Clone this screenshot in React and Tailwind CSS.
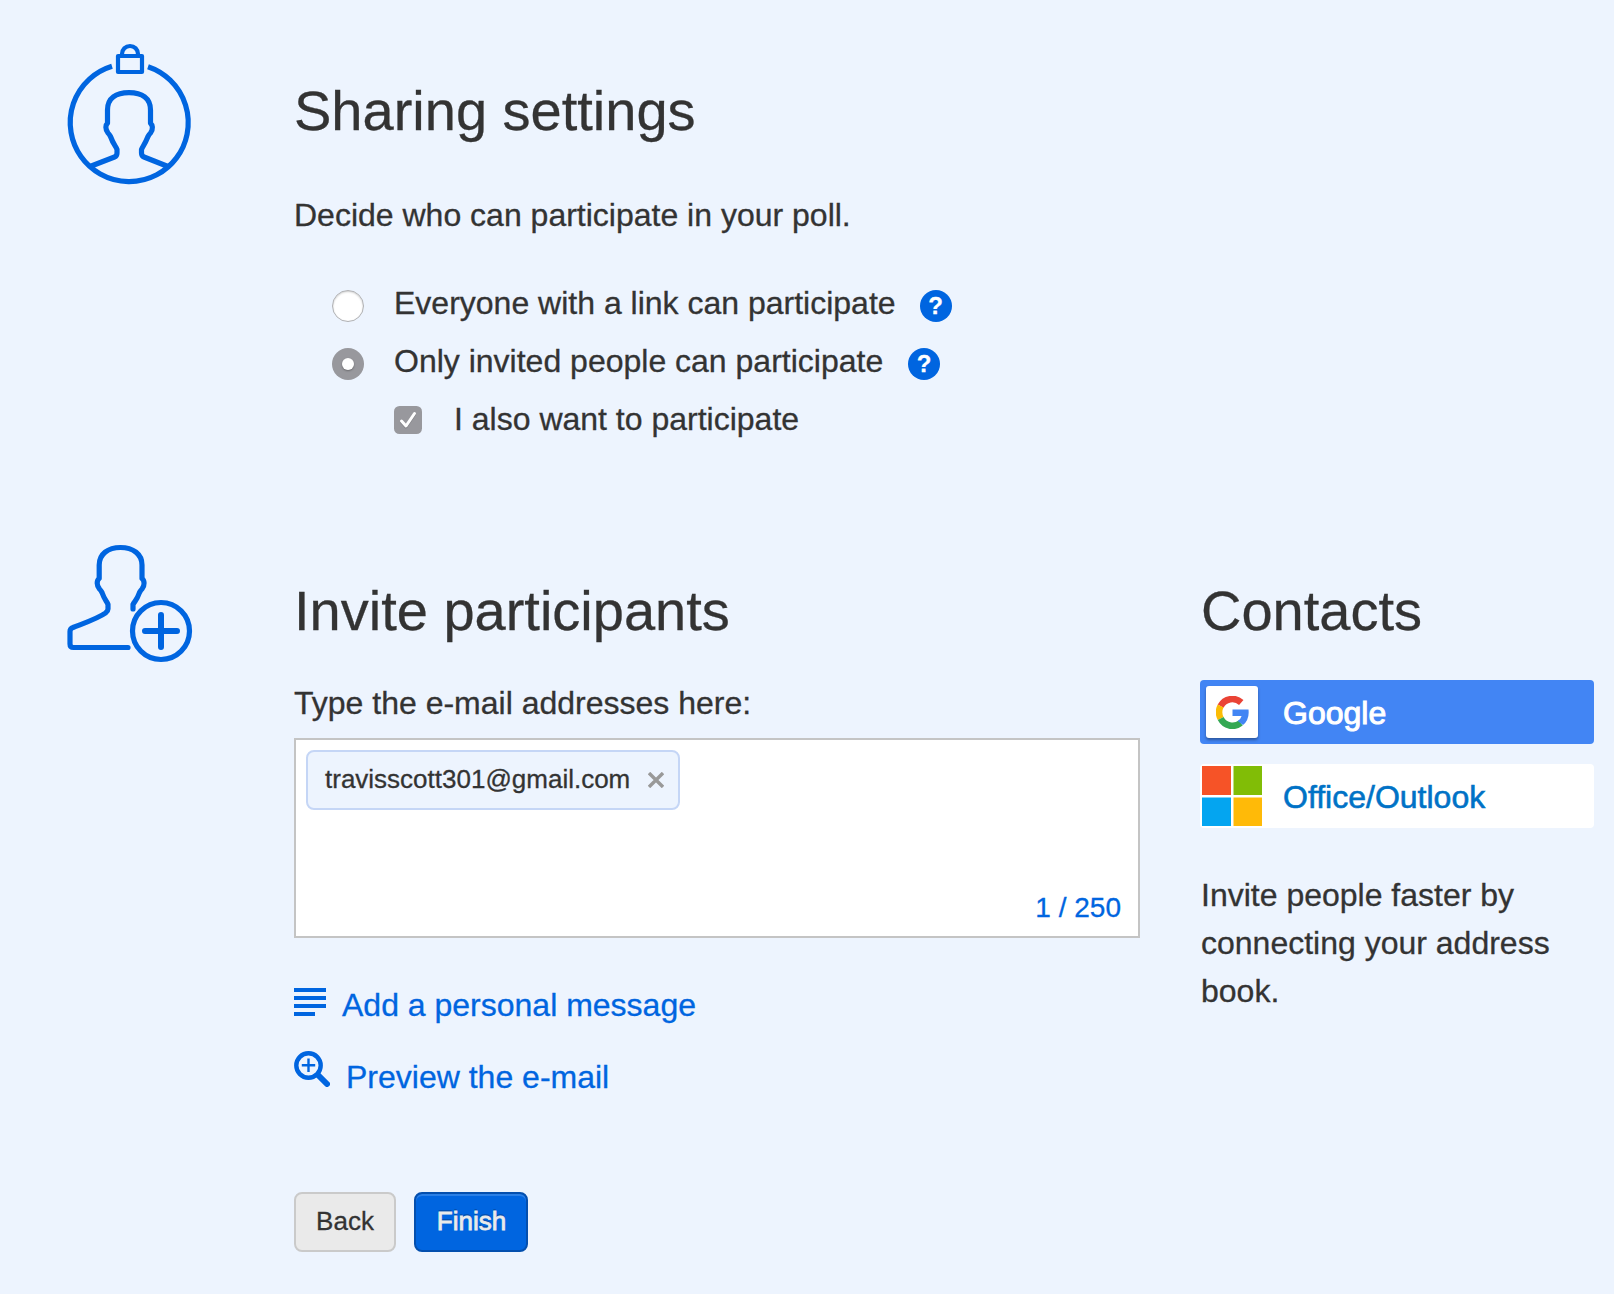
const BLUE = "#0065e0";

function LockedUserIcon() {
  return (
    <svg viewBox="0 0 160 170" className="h-[170px] w-[160px] shrink-0" fill="none" stroke={BLUE} strokeWidth="5.2">
      <path d="M62 36.200A59 59 0 1 0 98 36.700" />
      <path d="M68 26H92V42H68Z" strokeWidth="4.200" strokeLinejoin="round" />
      <path d="M72 25.500V24a8 8 0 0 1 16 0v1.500" strokeWidth="4.200" />
      <path
        d="M40 136.500L64.500 127Q67 126 67 123V119.500C66 116 64 116 60.500 106.500Q59.500 104.500 58 103C55 99 55.500 95 57.500 93.300V80C57.500 68 66 62.700 79 62.700S100.500 68 100.500 80V93.300C102.500 95 103.500 99 100.500 103Q99 104.500 98 106.500C94.500 115 93 116 91.500 119.500V123Q91.500 126 94 127L118 136.500"
        strokeLinejoin="round"
      />
    </svg>
  );
}

function AddUserIcon() {
  return (
    <svg viewBox="0 0 160 150" className="h-[150px] w-[160px] shrink-0" fill="none" stroke={BLUE} strokeWidth="5.2" strokeLinecap="round" strokeLinejoin="round">
      <path d="M78 117.500H23.500Q20 117.500 20 114V101.500Q20 98.500 23 97.500C33 93.500 48 88.500 55.500 83Q58 81 58 79V74.500C56.500 70.500 55 71 52 62.500Q51 60.500 49.500 59C46.500 55.500 46.500 50.500 49.200 48.500V35C49.200 24 58 17.500 70.500 17.500S92 24 92 35V48.500C94.500 50.500 95 55.500 92 59Q90.500 60.500 89.500 62.500C86.500 71 85 70.500 83 74.500V79" />
      <circle cx="111" cy="101" r="28.500" />
      <path d="M111 85V117M95 101H127" strokeWidth="6" />
    </svg>
  );
}

function Help() {
  return (
    <span className="flex size-8 items-start justify-center rounded-full bg-[#0065e0] text-[24px] leading-[31px] font-bold text-white">
      ?
    </span>
  );
}

function Radio({ checked }) {
  return checked ? (
    <span className="flex size-8 items-center justify-center rounded-full bg-[#98989d]">
      <span className="size-3 rounded-full bg-white shadow-[0_1px_2px_rgba(0,0,0,0.3)]" />
    </span>
  ) : (
    <span className="size-8 rounded-full border border-[#b0b1b4] bg-white shadow-[inset_0_1px_2px_rgba(0,0,0,0.2)]" />
  );
}

function Check() {
  return (
    <svg viewBox="0 0 28 28" className="size-7 shrink-0" fill="none">
      <rect width="28" height="28" rx="5.500" fill="#98989d" />
      <path d="M7.500 16L12 21L20.500 8.500" stroke="#7f7f84" strokeWidth="3" strokeLinecap="round" strokeLinejoin="round" />
      <path d="M7.500 15L12 20L20.500 7.500" stroke="#fff" strokeWidth="3" strokeLinecap="round" strokeLinejoin="round" />
    </svg>
  );
}

function GoogleLogo() {
  return (
    <svg viewBox="0 0 33 33" className="size-[33px]" fill="none" strokeWidth="6.600">
      <path stroke="#EA4335" d="M4.620 10.080A13.300 13.300 0 0 1 25.260 6.470" />
      <path stroke="#FBBC05" d="M4.690 22.540A13.300 13.300 0 0 1 4.620 10.080" />
      <path stroke="#34A853" d="M24.700 27A13.300 13.300 0 0 1 4.690 22.540" />
      <path fill="#4285F4" d="M16.500 13.600H32.500Q33.700 23.300 27 29.100L21.700 24.900Q24.800 23 25.600 19.900H16.500Z" />
    </svg>
  );
}

export default function App() {
  return (
    <div className="h-[1294px] w-[1614px] overflow-hidden bg-[#edf4fe] font-['Liberation_Sans',Arial,sans-serif] text-[32px] leading-[48px] text-[#333333] [-webkit-text-stroke:0.3px_currentColor]">
      <section className="flex h-[500px] pt-[30px] pl-[50px]">
        <LockedUserIcon />
        <div className="ml-[84px] pt-[49px]">
          <h1 className="text-[56px] leading-[64px]">Sharing settings</h1>
          <p className="mt-[48px]">Decide who can participate in your poll.</p>
          <div className="mt-[37px] ml-[38px] flex flex-col">
            <div className="flex h-[58px] items-start">
              <div className="mt-[14px] flex w-[62px]"><Radio /></div>
              <span className="mt-[3px]">Everyone with a link can participate</span>
              <div className="mt-[14px] ml-[24px]"><Help /></div>
            </div>
            <div className="flex h-[58px] items-start">
              <div className="mt-[14px] flex w-[62px]"><Radio checked /></div>
              <span className="mt-[3px]">Only invited people can participate</span>
              <div className="mt-[14px] ml-[25px]"><Help /></div>
            </div>
            <div className="flex h-[58px] items-start pl-[62px]">
              <div className="mt-[14px] w-[60px]"><Check /></div>
              <span className="mt-[3px]">I also want to participate</span>
            </div>
          </div>
        </div>
      </section>

      <section className="flex pt-[30px] pl-[50px]">
        <AddUserIcon />
        <div className="ml-[84px] w-[846px] pt-[49px]">
          <h1 className="text-[56px] leading-[64px]">Invite participants</h1>
          <p className="mt-[36px]">Type the e-mail addresses here:</p>
          <div className="mt-[11px] flex h-[200px] flex-col items-start justify-between border-2 border-[#c4c4c4] bg-white pt-[10px] pl-[10px]">
            <div className="flex h-[60px] w-[374px] items-start justify-between rounded-lg border-2 border-[#c5d6f6] bg-[#edf4fe] pr-[14px] pl-[17px] text-[26px]">
              <span className="leading-[54px]">travisscott301@gmail.com</span>
              <svg viewBox="0 0 16 16" className="mt-[20px] size-4" stroke="#999" strokeWidth="3.400">
                <path d="M1 1L15 15M15 1L1 15" />
              </svg>
            </div>
            <div className="mr-[17px] mb-[8px] self-end text-[28px] leading-[40px] text-[#0065e0]">1 / 250</div>
          </div>
          <a className="mt-[43px] flex h-[48px] gap-[16px] text-[#0065e0]">
            <svg viewBox="0 0 32 28" className="mt-[7px] h-[28px] w-[32px]" fill={BLUE}>
              <path d="M0 0H32V4H0ZM0 8H32V12H0ZM0 16H32V20H0ZM0 24H21V28H0Z" />
            </svg>
            Add a personal message
          </a>
          <a className="mt-[24px] flex h-[48px] gap-[16px] text-[#0065e0]">
            <svg viewBox="0 0 36 36" className="-mt-[2px] size-9" fill="none" stroke={BLUE}>
              <circle cx="14.500" cy="14.500" r="12.200" strokeWidth="4.400" />
              <path d="M14.500 7.500V21M7.800 14.300H21.200" strokeWidth="2.400" />
              <path d="M24 24L33 33" strokeWidth="6" strokeLinecap="round" />
            </svg>
            Preview the e-mail
          </a>
          <div className="mt-[91px] flex gap-[18px] text-[26px]">
            <button className="h-[60px] w-[102px] rounded-lg border-2 border-[#cacaca] bg-[#eaeaea] pb-[2px] leading-[54px]">Back</button>
            <button className="h-[60px] w-[114px] rounded-lg border-2 border-[#044fae] bg-[#0065e0] pb-[2px] pl-px leading-[54px] text-[#eaeaea] shadow-[inset_0_2px_0_#2a7fe6] [-webkit-text-stroke:0.8px_#eaeaea] [text-shadow:0_-2px_0_#0450b0]">
              Finish
            </button>
          </div>
        </div>
        <aside className="ml-[60px] w-[394px] pt-[49px]">
          <h1 className="pl-px text-[56px] leading-[64px]">Contacts</h1>
          <button className="mt-[37px] flex h-[64px] w-full items-center rounded-[4px] bg-[#4285f4] pl-[6px] text-white">
            <span className="flex size-[52px] items-center justify-center rounded-[3px] bg-white pl-px shadow-[0_2px_3px_rgba(0,0,0,0.35)]">
              <GoogleLogo />
            </span>
            <span className="ml-[25px] pt-[2px] [-webkit-text-stroke:1px_#fff]">Google</span>
          </button>
          <button className="mt-[20px] flex h-[64px] w-full items-center rounded-[4px] bg-white pl-[2px] text-[#0072c6]">
            <svg viewBox="0 0 60 60" className="size-[60px]">
              <path fill="#f65327" d="M0 0H29V29H0Z" />
              <path fill="#81bd06" d="M31.500 0H60V29H31.500Z" />
              <path fill="#04a5f0" d="M0 31.500H29V60H0Z" />
              <path fill="#ffba08" d="M31.500 31.500H60V60H31.500Z" />
            </svg>
            <span className="ml-[21px] pt-[2px] [-webkit-text-stroke:0.6px_#0072c6]">Office/Outlook</span>
          </button>
          <p className="mt-[43px] w-[380px] pl-px">Invite people faster by connecting your address book.</p>
        </aside>
      </section>
    </div>
  );
}
